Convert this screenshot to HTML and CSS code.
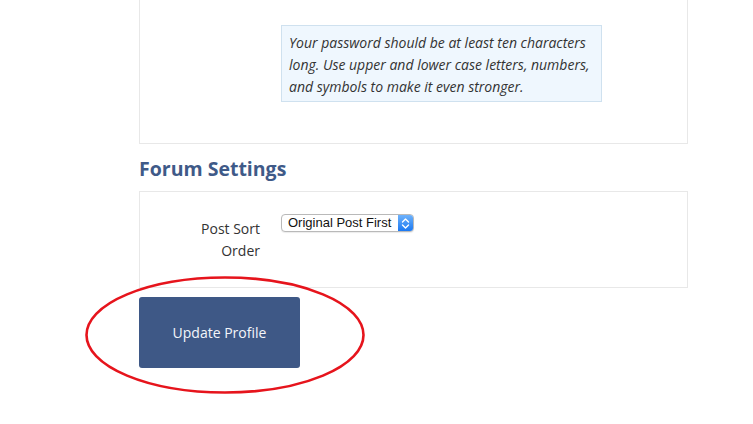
FILE: index.html
```html
<!DOCTYPE html>
<html lang="en">
<head>
<meta charset="utf-8">
<title>Profile</title>
<link rel="stylesheet" href="styles.css">
</head>
<body>
<div class="page">
  <section class="panel panel-top">
    <div class="row">
      <div class="label"></div>
      <div class="hint">Your password should be at least ten characters long. Use upper and lower case letters, numbers, and symbols to make it even stronger.</div>
    </div>
  </section>
  <h2 class="heading">Forum Settings</h2>
  <section class="panel panel-forum">
    <div class="row">
      <div class="label">Post Sort Order</div>
      <div class="field">
        <div class="select">
          <span class="select-text">Original Post First</span>
          <span class="select-arrow">
            <svg width="15" height="17" viewBox="0 0 15 17"><path d="M4.5 7 L7.5 4 L10.5 7 M4.5 10 L7.5 13 L10.5 10" fill="none" stroke="#fff" stroke-width="1.4" stroke-linecap="round" stroke-linejoin="round"/></svg>
          </span>
        </div>
      </div>
    </div>
  </section>
  <div class="actions">
    <button class="btn" type="button">Update Profile</button>
  </div>
  <svg class="annotation" width="284" height="122" viewBox="0 0 284 122"><ellipse cx="141" cy="60" rx="138.5" ry="57.5" fill="none" stroke="#e6141c" stroke-width="2.6"/></svg>
</div>
</body>
</html>
```
FILE: styles.css
```css
html, body {
  margin: 0;
  padding: 0;
  background: #fff;
}
body {
  font-family: "Open Sans", "Noto Sans", sans-serif;
  color: #333;
  min-height: 424px;
}
.page {
  position: relative;
  margin-left: 139px;
  width: 549px;
  padding-bottom: 56px;
}
.panel {
  box-sizing: border-box;
  width: 549px;
  border: 1px solid #e8e8e8;
}
.panel-top {
  border-top: none;
  padding: 25px 0 41px;
}
.panel-forum {
  padding: 22px 0 25px;
}
.row {
  display: grid;
  grid-template-columns: 121px 1fr;
  column-gap: 20px;
  align-items: start;
}
.label {
  padding: 4px 1px 0 40px;
  text-align: right;
  font-size: 14px;
  line-height: 22px;
  color: #333;
}
.hint {
  box-sizing: border-box;
  width: 321px;
  padding: 6px 7px 3px;
  background: #eff7fe;
  border: 1px solid #cfe1ef;
  font-style: italic;
  font-size: 14px;
  line-height: 22px;
  color: #333;
}
.heading {
  margin: 13px 0 10px;
  font-size: 19.5px;
  line-height: 24px;
  font-weight: 700;
  color: #3f5a88;
}
.field {
  display: flex;
}
.select {
  display: flex;
  box-sizing: border-box;
  width: 133px;
  height: 18px;
  border: 1px solid #b9b9b9;
  border-radius: 4px;
  background: #fff;
  box-shadow: 0 1px 1px rgba(0,0,0,0.08);
  overflow: hidden;
  font-family: "Liberation Sans", Arial, sans-serif;
  font-size: 13px;
  line-height: 16px;
  color: #111;
}
.select-text {
  flex: 1;
  padding-left: 6px;
  white-space: nowrap;
}
.select-arrow {
  width: 15px;
  height: 16px;
  background: linear-gradient(#6eb2fb, #1b79f2);
  display: flex;
  align-items: center;
  justify-content: center;
}
.select-arrow svg {
  display: block;
}
.actions {
  margin-top: 9px;
}
.btn {
  display: block;
  width: 161px;
  height: 71px;
  border: none;
  border-radius: 3px;
  background: #3e5886;
  color: #f4f6fa;
  font-family: "Open Sans", "Noto Sans", sans-serif;
  font-size: 14px;
  padding: 0;
  cursor: pointer;
}
.annotation {
  position: absolute;
  left: -55px;
  top: 275px;
}
```
